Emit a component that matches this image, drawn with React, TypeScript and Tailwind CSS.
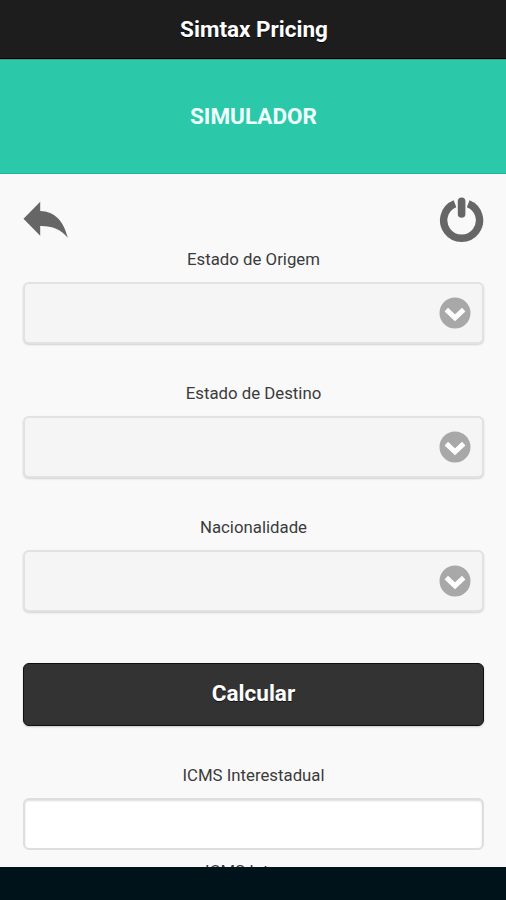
function ChevronBadge() {
  return (
    <svg className="h-8 w-8" viewBox="0 0 32 32" fill="none">
      <circle cx="16" cy="16" r="15.5" fill="#a8a8a8" />
      <path d="M7.3 12.6 16 20.8 24.7 12.6" stroke="#fff" strokeWidth="5" />
    </svg>
  );
}

function Label({ text, className = '' }: { text: string; className?: string }) {
  return (
    <div className={`h-5 shrink-0 text-center text-[16.8px] leading-5 text-[#3b3b3b] ${className}`}>
      <span className="inline-block whitespace-nowrap">{text}</span>
    </div>
  );
}

function SelectField({ label }: { label: string }) {
  return (
    <div className="h-[134px] shrink-0">
      <Label text={label} />
      <button
        aria-label={label}
        className="mt-[13px] flex h-[62px] w-full items-center justify-end rounded-[6px] border-2 border-[#e2e2e2] bg-[#f5f5f5] pr-[11px] shadow-[0_1px_2px_rgba(0,0,0,0.16)]"
      >
        <ChevronBadge />
      </button>
    </div>
  );
}

export default function App() {
  return (
    <div className="flex h-[900px] w-[506px] flex-col overflow-hidden bg-[#f9f9f9] font-['Roboto','Liberation_Sans',sans-serif]">
      <header className="flex h-[59px] shrink-0 items-center justify-center border-b border-black bg-[#1d1d1d] pt-0.5 pl-0.5">
        <h1 className="text-[22.5px] font-bold text-white [text-shadow:0_1px_0_#000]">Simtax Pricing</h1>
      </header>
      <div className="flex h-[115px] shrink-0 items-center justify-center border-y border-t-[#3a9f88] border-b-[#1eb795] bg-[#2bc8aa] pl-px">
        <h2 className="text-[22.5px] font-bold text-[#effffb]">SIMULADOR</h2>
      </div>
      <main className="flex h-[693px] shrink-0 flex-col overflow-hidden pl-[23px] pr-[22px]">
        <div className="flex h-[75px] shrink-0 justify-between pt-[22px]">
          <svg className="h-12 w-12" viewBox="1 0 48 48">
            <path d="M1.5 22.7 18.2 5.7V15C33 15.5 41.5 25 45.8 41.7C38 33 30.5 29.8 18.2 30V39.7Z" fill="#666" />
          </svg>
          <svg className="h-12 w-12" viewBox="0 0 48 48" fill="none" stroke="#666">
            <path d="M19 7.7A17.9 17.9 0 1 0 32.2 7.7" strokeWidth="7.4" />
            <path d="M25.6 5.3V18" strokeWidth="10.6" stroke="#f9f9f9" strokeLinecap="round" />
            <path d="M25.6 5.3V18" strokeWidth="7.6" strokeLinecap="round" />
          </svg>
        </div>
        <SelectField label="Estado de Origem" />
        <SelectField label="Estado de Destino" />
        <SelectField label="Nacionalidade" />
        <button className="mt-3 flex h-[63px] shrink-0 items-center justify-center rounded-[6px] border border-[#101010] bg-[#333] pb-0.5 text-[22.5px] font-bold text-white shadow-[0_1px_2px_rgba(0,0,0,0.2)] [text-shadow:0_1px_0_#111]">
          Calcular
        </button>
        <Label text="ICMS Interestadual" className="mt-[39px]" />
        <input
          aria-label="ICMS Interestadual"
          className="mt-[13px] h-[52px] shrink-0 rounded-[6px] border-2 border-[#dedede] bg-white shadow-[inset_0_1px_2px_rgba(0,0,0,0.14)]"
        />
        <Label text="ICMS Interno" className="mt-[11px]" />
      </main>
      <footer className="h-[33px] shrink-0 bg-[#00131a]" />
    </div>
  );
}
